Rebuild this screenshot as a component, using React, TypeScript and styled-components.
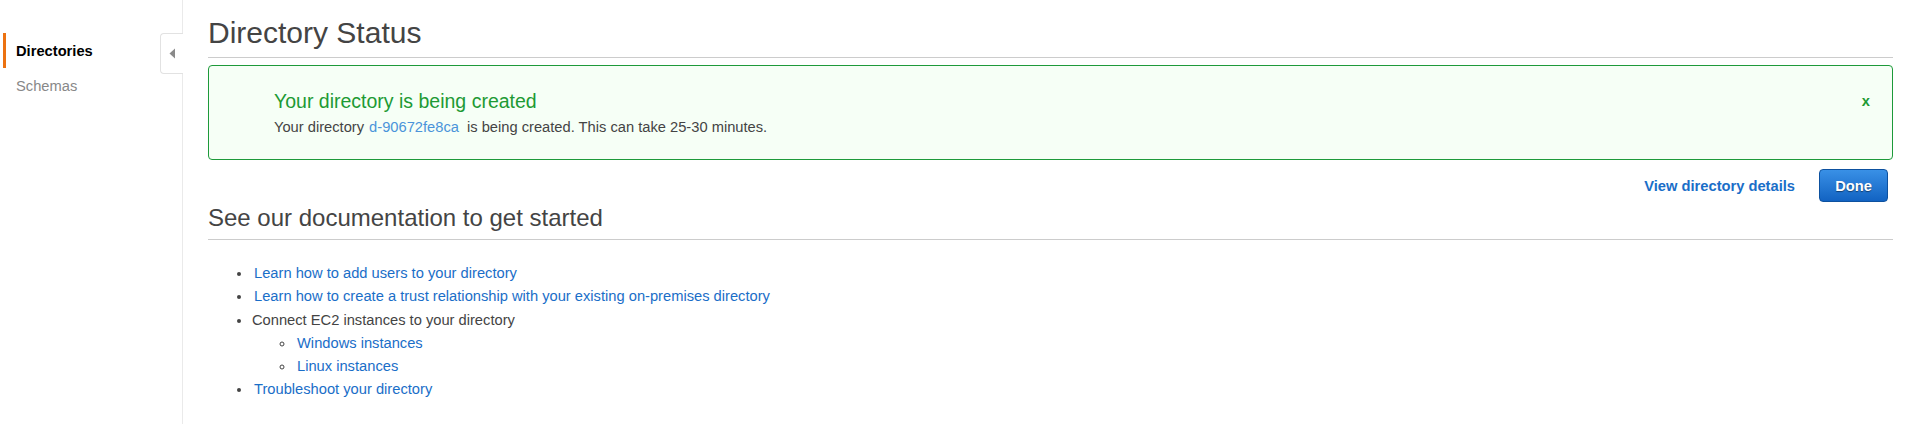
import React from "react";
import styled, { createGlobalStyle } from "styled-components";

const Global = createGlobalStyle`
  html, body { margin: 0; padding: 0; background: #fff; }
  body { font-family: "Liberation Sans", Arial, Helvetica, sans-serif; font-size: 14.7px; color: #444; }
  * { box-sizing: border-box; }
`;

const Page = styled.div`
  display: flex;
  min-height: 424px;
`;

const Sidebar = styled.aside`
  position: relative;
  width: 183px;
  flex: 0 0 183px;
  border-right: 1px solid #eaeaea;
  padding-top: 33px;
`;

const NavItem = styled.a<{ $active?: boolean }>`
  display: flex;
  align-items: center;
  height: 35px;
  margin-left: 3px;
  padding-left: 10px;
  border-left: 3px solid ${(p) => (p.$active ? "#ec7211" : "transparent")};
  font-size: 14.7px;
  font-weight: ${(p) => (p.$active ? 700 : 400)};
  color: ${(p) => (p.$active ? "#000" : "#888")};
  text-decoration: none;
  cursor: pointer;
`;

const CollapseTab = styled.button`
  position: absolute;
  top: 33px;
  right: -1px;
  width: 23px;
  height: 41px;
  padding: 0;
  background: #fff;
  border: 1px solid #e2e2e2;
  border-right: none;
  border-radius: 4px 0 0 4px;
  display: flex;
  align-items: center;
  justify-content: center;
  cursor: pointer;
`;

const Main = styled.main`
  flex: 1;
  min-width: 0;
  padding: 16px 19px 0 25px;
`;

const Title = styled.h1`
  margin: 0;
  font-size: 30px;
  line-height: 33px;
  font-weight: 400;
  color: #444;
  padding-bottom: 8px;
  border-bottom: 1px solid #cccccc;
`;

const Alert = styled.div`
  margin-top: 7px;
  display: flex;
  align-items: flex-start;
  border: 1px solid #1d9a3a;
  border-radius: 4px;
  background: #f6fff6;
  padding: 23px 22px 22px 65px;
`;

const AlertBody = styled.div`
  flex: 1;
`;

const AlertTitle = styled.div`
  font-size: 19.5px;
  line-height: 24px;
  color: #1d9a34;
  margin-bottom: 4px;
`;

const AlertText = styled.div`
  font-size: 14.7px;
  line-height: 20px;
  color: #444;
`;

const IdLink = styled.a`
  color: #4a94da;
  text-decoration: none;
  margin: 0 4px 0 5px;
  cursor: pointer;
`;

const Close = styled.button`
  margin-top: 2px;
  padding: 0;
  border: none;
  background: none;
  font-family: inherit;
  font-size: 14.7px;
  line-height: 20px;
  font-weight: 700;
  color: #1d9a34;
  cursor: pointer;
`;

const Actions = styled.div`
  display: flex;
  justify-content: flex-end;
  align-items: center;
  gap: 24px;
  margin-top: 9px;
  padding-right: 5px;
`;

const TextLink = styled.a`
  font-size: 14.7px;
  font-weight: 700;
  color: #1a6ec8;
  text-decoration: none;
  cursor: pointer;
`;

const PrimaryButton = styled.button`
  width: 69px;
  height: 33px;
  padding: 0;
  border: 1px solid #0d519f;
  border-radius: 4px;
  background: linear-gradient(to bottom, #3990e6, #1263c2);
  color: #fff;
  font-family: inherit;
  font-size: 14.7px;
  font-weight: 700;
  text-shadow: 0 1px 1px rgba(0, 0, 0, 0.45);
  cursor: pointer;
`;

const SectionTitle = styled.h2`
  margin: 3px 0 0;
  font-size: 24px;
  line-height: 26px;
  font-weight: 400;
  color: #444;
  padding-bottom: 8px;
  border-bottom: 1px solid #cccccc;
`;

const List = styled.ul<{ $nested?: boolean }>`
  margin: ${(p) => (p.$nested ? "0" : "22px 0 0")};
  padding-left: ${(p) => (p.$nested ? "43px" : "44px")};
  list-style-type: ${(p) => (p.$nested ? "circle" : "disc")};
`;

const Item = styled.li`
  font-size: 14.7px;
  line-height: 23.3px;
  color: #444;
`;

const DocLink = styled.a`
  color: #1a6ec8;
  text-decoration: none;
  margin-left: 2px;
  cursor: pointer;
`;

export default function App() {
  return (
    <>
      <Global />
      <Page>
        <Sidebar>
          <NavItem $active>Directories</NavItem>
          <NavItem>Schemas</NavItem>
          <CollapseTab aria-label="Collapse">
            <svg width="7" height="11" viewBox="0 0 7 11">
              <path d="M6 0.5 L0.5 5.5 L6 10.5 Z" fill="#8a8a8a" />
            </svg>
          </CollapseTab>
        </Sidebar>
        <Main>
          <Title>Directory Status</Title>
          <Alert>
            <AlertBody>
              <AlertTitle>Your directory is being created</AlertTitle>
              <AlertText>
                Your directory<IdLink>d-90672fe8ca</IdLink> is being created. This can take 25-30 minutes.
              </AlertText>
            </AlertBody>
            <Close>x</Close>
          </Alert>
          <Actions>
            <TextLink>View directory details</TextLink>
            <PrimaryButton>Done</PrimaryButton>
          </Actions>
          <SectionTitle>See our documentation to get started</SectionTitle>
          <List>
            <Item>
              <DocLink>Learn how to add users to your directory</DocLink>
            </Item>
            <Item>
              <DocLink>Learn how to create a trust relationship with your existing on-premises directory</DocLink>
            </Item>
            <Item>
              Connect EC2 instances to your directory
              <List $nested>
                <Item>
                  <DocLink>Windows instances</DocLink>
                </Item>
                <Item>
                  <DocLink>Linux instances</DocLink>
                </Item>
              </List>
            </Item>
            <Item>
              <DocLink>Troubleshoot your directory</DocLink>
            </Item>
          </List>
        </Main>
      </Page>
    </>
  );
}
